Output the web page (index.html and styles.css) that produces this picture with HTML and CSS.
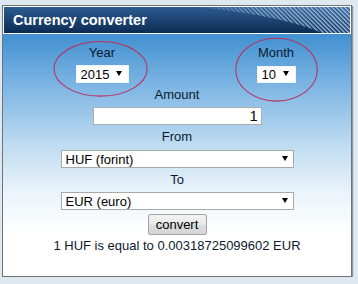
FILE: index.html
```html
<!DOCTYPE html>
<html lang="en">
<head>
    <meta charset="UTF-8">
    <title>Currency converter</title>
    <link rel="stylesheet" href="styles.css">
</head>
<body>
    <div class="widget">
        <div class="header">
            <svg class="stripes" width="346" height="26" viewBox="0 0 346 26">
                <defs>
                    <pattern id="lines" width="3" height="3" patternUnits="userSpaceOnUse" patternTransform="rotate(-45)">
                        <rect width="1.4" height="3" fill="#a9c9ea"/>
                    </pattern>
                    <linearGradient id="fade" x1="0" x2="1" y1="0" y2="0">
                        <stop offset="0" stop-color="#fff" stop-opacity="0.15"/>
                        <stop offset="0.45" stop-color="#fff" stop-opacity="0.75"/>
                        <stop offset="1" stop-color="#fff" stop-opacity="1"/>
                    </linearGradient>
                    <mask id="m">
                        <rect x="190" width="156" height="26" fill="url(#fade)"/>
                    </mask>
                </defs>
                <path d="M190 0 C240 4 292 14 318 26 L346 26 L346 0 Z" fill="url(#lines)" mask="url(#m)"/>
            </svg>
            <span class="title">Currency converter</span>
        </div>
        <div class="content">
            <div class="period">
                <div class="cell">
                    <div class="label">Year</div>
                    <span class="pick year"><select><option>2015</option></select></span>
                </div>
                <div class="cell">
                    <div class="label">Month</div>
                    <span class="pick month"><select><option>10</option></select></span>
                </div>
            </div>
            <div class="label amount-label">Amount</div>
            <input class="amount" type="text" value="1">
            <div class="label from-label">From</div>
            <span class="pick wide from"><select><option>HUF (forint)</option></select></span>
            <div class="label to-label">To</div>
            <span class="pick wide to"><select><option>EUR (euro)</option></select></span>
            <button class="convert">convert</button>
            <div class="result">1 HUF is equal to 0.00318725099602 EUR</div>
        </div>
        <svg class="marks" width="348" height="270" viewBox="0 0 348 270">
            <ellipse cx="97.6" cy="62.8" rx="46.6" ry="27.3" fill="none" stroke="#b8325f" stroke-width="1.1"/>
            <ellipse cx="273.5" cy="63.7" rx="40.8" ry="31.4" fill="none" stroke="#b8325f" stroke-width="1.1"/>
        </svg>
    </div>
</body>
</html>
```

FILE: styles.css
```css
body {
    margin: 0;
    background: #dfe7ef;
    font-family: "Liberation Sans", Arial, sans-serif;
    font-size: 13px;
    color: #0b1a2e;
}
.widget {
    position: relative;
    width: 348px;
    height: 270px;
    margin: 5px 0 0 2px;
    border: 1px solid #6c737b;
    box-shadow: 1px 1px 1px rgba(0, 0, 0, 0.35);
    background: #fff;
}
.header {
    position: relative;
    height: 26px;
    border: 1px solid #fff;
    background: linear-gradient(#2d5c91, #0c2b54);
    overflow: hidden;
}
.stripes {
    position: absolute;
    top: 0;
    left: 0;
}
.title {
    position: relative;
    display: block;
    padding-left: 9px;
    line-height: 26px;
    font-size: 14.5px;
    font-weight: bold;
    color: #fff;
}
.content {
    height: 242px;
    display: flex;
    flex-direction: column;
    align-items: center;
    background: linear-gradient(#4190d1 0, #7bb4e3 50px, #bedbf1 110px, #ebf4fa 160px, #fff 200px);
}
.period {
    align-self: stretch;
    display: grid;
    grid-template-columns: 198px 1fr;
    margin-top: 11px;
}
.cell {
    display: flex;
    flex-direction: column;
    align-items: center;
}
.label {
    line-height: 15px;
}
.pick {
    position: relative;
    display: inline-block;
}
.pick::after {
    content: "";
    position: absolute;
    right: 7px;
    top: 6px;
    border-left: 3px solid transparent;
    border-right: 3px solid transparent;
    border-top: 5px solid #000;
    pointer-events: none;
}
.pick select {
    display: block;
    appearance: none;
    margin: 0;
    padding: 0 0 0 4px;
    border: 1px solid #eef3f8;
    border-radius: 0;
    background: #fff;
    font-family: inherit;
    font-size: 13px;
    color: #000;
    box-sizing: border-box;
}
.year {
    margin-top: 5px;
}
.year select {
    width: 53px;
    height: 18px;
}
.month {
    margin-top: 6px;
}
.month select {
    width: 39px;
    height: 17px;
}
.month::after {
    top: 5px;
}
.amount-label {
    margin-top: 4px;
}
.amount {
    width: 169px;
    height: 18px;
    margin-top: 5px;
    padding: 0 3px;
    box-sizing: border-box;
    border: 1px solid #abadb3;
    font-family: inherit;
    font-size: 14px;
    text-align: right;
    color: #000;
}
.from-label, .to-label {
    margin-top: 4px;
}
.from {
    margin-top: 6px;
}
.to {
    margin-top: 5px;
}
.wide select {
    width: 233px;
    height: 18px;
    border-color: #a9a9a9;
}
.wide::after {
    right: 6px;
}
.convert {
    width: 59px;
    height: 21px;
    margin-top: 4px;
    padding: 0;
    border: 1px solid #a3a3a3;
    border-radius: 2px;
    background: linear-gradient(#f3f3f3, #e8e8e8 50%, #dcdcdc 51%, #d6d6d6);
    font-family: inherit;
    font-size: 13px;
    color: #000;
}
.result {
    margin-top: 3px;
    line-height: 15px;
}
.marks {
    position: absolute;
    top: 0;
    left: 0;
    pointer-events: none;
}
```
